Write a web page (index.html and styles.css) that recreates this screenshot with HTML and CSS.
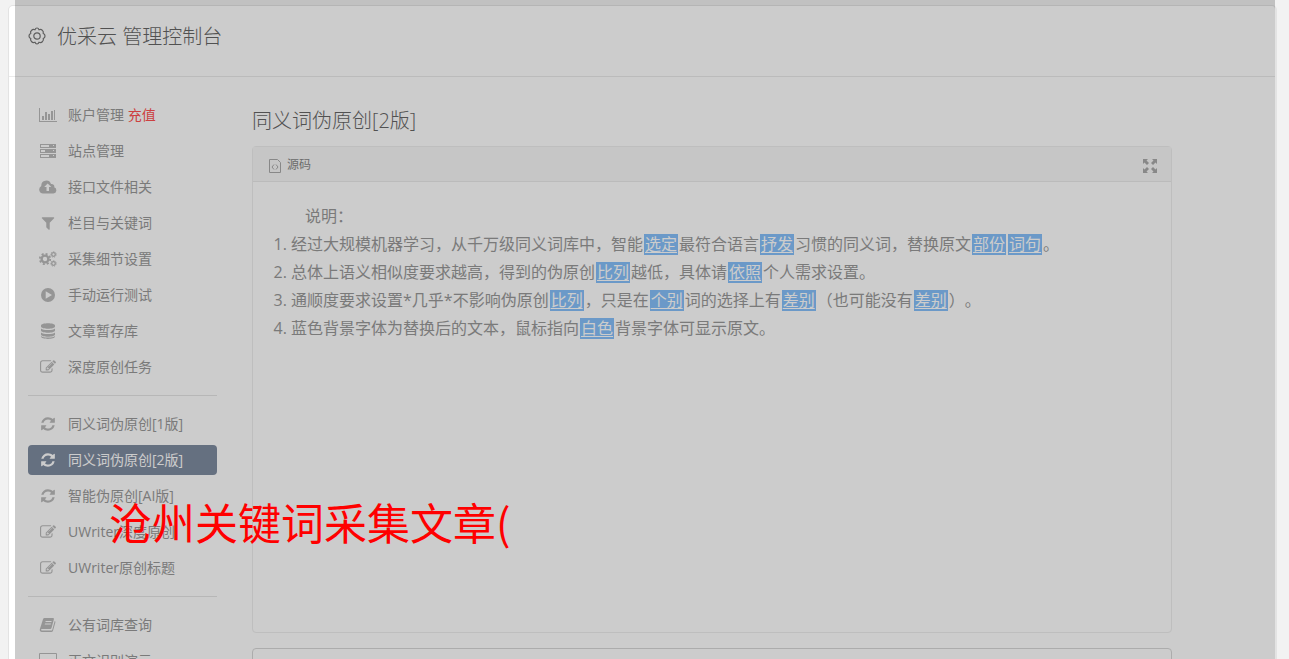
FILE: index.html
```
<!DOCTYPE html>
<html lang="zh-CN">
<head>
    <meta charset="UTF-8">
    <meta name="viewport" content="width=device-width, initial-scale=1.0">
    <title>优采云 管理控制台</title>
    <link rel="stylesheet" href="styles.css">
</head>
<body>
    <svg class="sprite" aria-hidden="true">
        <symbol id="chart" viewBox="0 0 18 16"><path d="M0 1h1v13h17v1H0zM3 9h2v4H3zM6 5h2v8H6zM9 7h2v6H9zM12 4h2v9h-2zM15 3h1v10h-1z"/></symbol>
        <symbol id="server" viewBox="0 0 18 16"><path fill-rule="evenodd" d="M1 1h16v4H1zM2 2v2h8V2zM14 2v1h1V2zM1 6h16v4H1zM2 7v2h4V7zM14 7v1h1V7zM1 11h16v4H1zM2 12v2h8v-2zM14 12v1h1v-1z"/></symbol>
        <symbol id="cloud" viewBox="0 0 18 16"><path fill-rule="evenodd" d="M4 14.500A4 4 0 0 1 2.300 7 5 5 0 0 1 12 5a2.600 2.600 0 0 1 3.200 3.300A3.200 3.200 0 0 1 14.500 14.500zM8.700 4.500L5.200 8h2.300v4h2.500V8h2.300z"/></symbol>
        <symbol id="filter" viewBox="0 0 1792 1792"><path d="M1595 295q17 41-14 70l-493 493v742q0 42-39 59-13 5-25 5-27 0-45-19l-256-256q-19-19-19-45v-486l-493-493q-31-29-14-70 17-39 59-39h1280q42 0 59 39z"/></symbol>
        <symbol id="cogs" viewBox="0 0 18 16">
            <g fill="none" stroke="currentColor">
                <circle cx="6" cy="8" r="3.400" stroke-width="2.400"/>
                <circle cx="6" cy="8" r="5.200" stroke-width="1.800" stroke-dasharray="2.040 2.040"/>
                <circle cx="14.500" cy="3.500" r="1.800" stroke-width="1.300"/>
                <circle cx="14.500" cy="3.500" r="2.700" stroke-width="1" stroke-dasharray="1.210 1.210"/>
                <circle cx="14.500" cy="12.500" r="1.800" stroke-width="1.300"/>
                <circle cx="14.500" cy="12.500" r="2.700" stroke-width="1" stroke-dasharray="1.210 1.210"/>
            </g>
        </symbol>
        <symbol id="play" viewBox="0 0 18 16"><path fill-rule="evenodd" d="M9 1a7 7 0 1 1 0 14A7 7 0 0 1 9 1zM6.700 4.300v7.400L13 8z"/></symbol>
        <symbol id="database" viewBox="0 0 18 16"><path d="M2 2.500C2-.500 16-.500 16 2.500v1c0 3-14 3-14 0zM2 5.500c2 2 12 2 14 0v2c0 3-14 3-14 0zM2 9.500c2 2 12 2 14 0v2c0 3-14 3-14 0zM2 13c2 2 12 2 14 0v.500c0 3.200-14 3.200-14 0z"/></symbol>
        <symbol id="edit" viewBox="0 0 1792 1792"><path d="M888 1184l116-116-152-152-116 116v56h96v96h56zm440-720q-16-16-33 1l-350 350q-17 17-1 33t33-1l350-350q17-17 1-33zm80 594v190q0 119-84.500 203.500t-203.500 84.500h-832q-119 0-203.500-84.500t-84.500-203.500v-832q0-119 84.500-203.500t203.500-84.500h832q63 0 117 25 15 7 18 23 3 17-9 29l-49 49q-14 14-32 8-23-6-45-6h-832q-66 0-113 47t-47 113v832q0 66 47 113t113 47h832q66 0 113-47t47-113v-126q0-13 9-22l64-64q15-15 35-7t20 29zm-96-738l288 288-672 672h-288v-288zm444 132l-92 92-288-288 92-92q28-28 68-28t68 28l152 152q28 28 28 68t-28 68z"/></symbol>
        <symbol id="refresh" viewBox="0 0 1792 1792"><path d="M1639 1056q0 5-1 7-64 268-268 434.500t-478 166.500q-146 0-282.500-55t-243.500-157l-129 129q-19 19-45 19t-45-19-19-45v-448q0-26 19-45t45-19h448q26 0 45 19t19 45-19 45l-137 137q71 66 161 102t187 36q134 0 250-65t186-179q11-17 53-117 8-23 30-23h192q13 0 22.500 9.500t9.500 22.500zm25-800v448q0 26-19 45t-45 19h-448q-26 0-45-19t-19-45 19-45l138-138q-148-137-349-137-134 0-250 65t-186 179q-11 17-53 117-8 23-30 23h-199q-13 0-22.500-9.500t-9.500-22.500v-7q65-268 270-434.500t480-166.500q146 0 284 55.500t245 156.500l130-129q19-19 45-19t45 19 19 45z"/></symbol>
        <symbol id="book" viewBox="0 0 18 16"><path fill-rule="evenodd" d="M5.500 1H14q1.200 0 .900 1.200L12.500 11q-.300 1-1.300 1H3q-1 0-1 .800 0 .700 1 .700h9.500q.500 0 .700-.600L15.700 4q1 .300.700 1.300L14 13.700Q13.600 15 12.300 15H3Q.500 15 .800 12.300L4 2.200Q4.400 1 5.500 1zM6.700 4l-.300 1h6l.300-1zM6 6.500l-.300 1h6l.300-1z"/></symbol>
        <symbol id="desktop" viewBox="0 0 18 16"><path fill-rule="evenodd" d="M1 0h16q1 0 1 1v10q0 1-1 1h-5l1 3H5l1-3H1q-1 0-1-1V1q0-1 1-1zM1 1v9h16V1z"/></symbol>
    </svg>

    <div class="container">
        <header class="header">
            <svg class="gear" viewBox="0 0 18 18" fill="none" stroke="currentColor" stroke-width="1.200" stroke-linejoin="round">
                <path d="M9 1Q10.500 1 11 2.800 12.800 1.800 14 3 15.900 4.500 15.200 6.500 17 7 17 9T15.200 11.500Q16 13.500 14.500 14.500 13 16.200 11 15.200 10.500 17 9 17T7 15.200Q5 16.200 3.500 14.500 2 13 2.800 11.500 1 11 1 9T2.800 6.500Q2 4.500 3.500 3.500 5 1.800 7 2.800 7.500 1 9 1z"/>
                <circle cx="9" cy="9" r="3.200"/>
            </svg>
            <h1>优采云 管理控制台</h1>
        </header>

        <div class="content">
            <nav class="sidebar">
                <ul>
                    <li><a href="#"><svg><use href="#chart"/></svg><span>账户管理 <em>充值</em></span></a></li>
                    <li><a href="#"><svg><use href="#server"/></svg>站点管理</a></li>
                    <li><a href="#"><svg><use href="#cloud"/></svg>接口文件相关</a></li>
                    <li><a href="#"><svg><use href="#filter"/></svg>栏目与关键词</a></li>
                    <li><a href="#"><svg><use href="#cogs"/></svg>采集细节设置</a></li>
                    <li><a href="#"><svg><use href="#play"/></svg>手动运行测试</a></li>
                    <li><a href="#"><svg><use href="#database"/></svg>文章暂存库</a></li>
                    <li><a href="#"><svg><use href="#edit"/></svg>深度原创任务</a></li>
                </ul>
                <ul>
                    <li><a href="#"><svg><use href="#refresh"/></svg>同义词伪原创[1版]</a></li>
                    <li><a href="#" class="active"><svg><use href="#refresh"/></svg>同义词伪原创[2版]</a></li>
                    <li><a href="#"><svg><use href="#refresh"/></svg>智能伪原创[AI版]</a></li>
                    <li><a href="#"><svg><use href="#edit"/></svg>UWriter深度原创</a></li>
                    <li><a href="#"><svg><use href="#edit"/></svg>UWriter原创标题</a></li>
                </ul>
                <ul>
                    <li><a href="#"><svg><use href="#book"/></svg>公有词库查询</a></li>
                    <li><a href="#"><svg><use href="#desktop"/></svg>正文识别演示</a></li>
                </ul>
            </nav>

            <main class="main">
                <h2>同义词伪原创[2版]</h2>
                <section class="editor">
                    <div class="toolbar">
                        <button type="button" class="source">
                            <svg width="12" height="14" viewBox="0 0 12 14" fill="none" stroke="currentColor"><path d="M.5.500h8l3 3v10H.5zM5 5.500L3 8l2 2.500M7 5.500L9 8l-2 2.500"/></svg>
                            源码
                        </button>
                        <button type="button" class="expand" aria-label="全屏">
                            <svg width="14" height="14" viewBox="0 0 14 14" fill="currentColor"><path d="M0 0h5L3.500 1.500 6 4 4 6 1.500 3.500 0 5zM14 0v5l-1.500-1.500L10 6 8 4l2.500-2.500L9 0zM0 14V9l1.500 1.500L4 8l2 2-2.500 2.500L5 14zM14 14H9l1.500-1.500L8 10l2-2 2.500 2.500L14 9z"/></svg>
                        </button>
                    </div>
                    <div class="text">
                        <p>说明：</p>
                        <ol>
                            <li>经过大规模机器学习，从千万级同义词库中，智能<u>选定</u>最符合语言<u>抒发</u>习惯的同义词，替换原文<u>部份</u><u>词句</u>。</li>
                            <li>总体上语义相似度要求越高，得到的伪原创<u>比列</u>越低，具体请<u>依照</u>个人需求设置。</li>
                            <li>通顺度要求设置*几乎*不影响伪原创<u>比列</u>，只是在<u>个别</u>词的选择上有<u>差别</u>（也可能没有<u>差别</u>）。</li>
                            <li>蓝色背景字体为替换后的文本，鼠标指向<u>白色</u>背景字体可显示原文。</li>
                        </ol>
                    </div>
                </section>
                <section class="box"></section>
            </main>
        </div>
    </div>

    <div class="mask"></div>
    <div class="caption">沧州关键词采集文章(</div>
</body>
</html>
```
FILE: styles.css
```
* {
    box-sizing: border-box;
}
body {
    position: relative;
    height: 100vh;
    margin: 0;
    padding: 5px 12px 0 8px;
    overflow: hidden;
    background-color: #f2f2f2;
    color: #999;
    font-family: "Open Sans", "Noto Sans CJK SC", sans-serif;
    font-size: 14px;
}
h1, h2, p, ul, ol {
    margin: 0;
    padding: 0;
}
.sprite {
    display: none;
}
.container {
    background-color: white;
    border: 1px solid #e3e3e3;
    border-right-width: 2px;
    border-radius: 5px 5px 0 0;
}
.header {
    display: flex;
    align-items: center;
    gap: 11px;
    height: 71px;
    padding: 0 19px 8px;
    border-bottom: 1px solid #eaeaea;
    color: #666;
}
.header .gear {
    width: 18px;
    height: 18px;
    margin-bottom: 3px;
    color: #777;
}
h1, h2 {
    font-size: 20px;
    font-weight: 300;
    line-height: 28px;
}
.content {
    display: flex;
    gap: 35px;
    padding: 23px 103px 24px 19px;
}

/* sidebar */
.sidebar {
    width: 189px;
    flex: none;
}
.sidebar ul {
    list-style: none;
}
.sidebar ul + ul {
    margin-top: 13px;
    padding-top: 13px;
    border-top: 1px solid #e5e5e5;
}
.sidebar li + li {
    margin-top: 6px;
}
.sidebar a {
    display: flex;
    align-items: center;
    gap: 11px;
    height: 30px;
    padding: 0 0 2px 11px;
    border-radius: 4px;
    color: #999;
    text-decoration: none;
}
.sidebar svg {
    width: 18px;
    height: 16px;
    margin-top: 2px;
    fill: currentColor;
    color: #bbb;
}
.sidebar em {
    color: #ff5050;
    font-style: normal;
}
.sidebar .active {
    background-color: #7f8ca0;
    color: white;
}
.sidebar .active svg {
    color: white;
}

/* editor */
.main {
    flex: 1;
    min-width: 0;
}
.main h2 {
    padding: 7px 0 11px;
    color: #666;
}
.editor {
    height: 487px;
    border: 1px solid #eee;
    border-radius: 4px;
}
.toolbar {
    display: flex;
    align-items: center;
    justify-content: space-between;
    height: 35px;
    padding: 0 14px 0 16px;
    background-color: #f8f8f8;
    border-bottom: 1px solid #eaeaea;
}
.toolbar button {
    display: flex;
    align-items: center;
    gap: 6px;
    padding: 0;
    border: none;
    background: none;
    color: #888;
    font: inherit;
    font-size: 12px;
    cursor: pointer;
}
.toolbar svg {
    margin-top: 4px;
    color: #aaa;
}
.text {
    padding: 20px;
    font-size: 16px;
    line-height: 28px;
    text-spacing-trim: space-all;
}
.text p {
    text-indent: 32px;
}
.text ol {
    padding-left: 18px;
}
.text u {
    display: inline-block;
    height: 21px;
    margin: 0 1px;
    padding: 0 1px;
    background-color: #86c0fa;
    color: white;
    line-height: 21px;
    text-underline-offset: 2px;
}
.box {
    height: 200px;
    margin-top: 15px;
    border: 1px solid #d8d8d8;
    border-radius: 4px;
}

/* dimmed layer with the caption on top */
.mask {
    position: absolute;
    top: 0;
    right: 14px;
    bottom: 0;
    left: 15px;
    background-color: rgba(0,0,0,0.2);
    pointer-events: none;
}
.caption {
    position: absolute;
    top: 491px;
    left: 109px;
    color: red;
    font-family: "Noto Sans CJK SC", sans-serif;
    font-size: 43px;
    line-height: 60px;
}
```
